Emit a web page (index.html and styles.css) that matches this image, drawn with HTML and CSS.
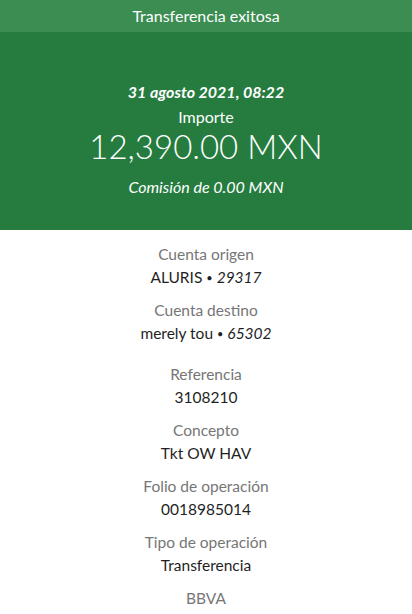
FILE: index.html
```html
<!DOCTYPE html>
<html lang="es">
<head>
    <meta charset="UTF-8">
    <meta name="viewport" content="width=device-width, initial-scale=1.0">
    <title>Transferencia exitosa</title>
    <link rel="stylesheet" href="styles.css">
</head>
<body>

    <div class="topbar">Transferencia exitosa</div>

    <div class="summary">
        <div class="date">31 agosto 2021, 08:22</div>
        <div class="amount-label">Importe</div>
        <div class="amount">12,390.00 MXN</div>
        <div class="fee">Comisión de 0.00 MXN</div>
    </div>

    <div class="details">
        <div class="item">
            <div class="label">Cuenta origen</div>
            <div class="value">ALURIS <span class="dot">•</span> <i>29317</i></div>
        </div>
        <div class="item">
            <div class="label">Cuenta destino</div>
            <div class="value">merely tou <span class="dot">•</span> <i>65302</i></div>
        </div>
        <div class="item item-first">
            <div class="label">Referencia</div>
            <div class="value">3108210</div>
        </div>
        <div class="item">
            <div class="label">Concepto</div>
            <div class="value">Tkt OW HAV</div>
        </div>
        <div class="item">
            <div class="label">Folio de operación</div>
            <div class="value">0018985014</div>
        </div>
        <div class="item">
            <div class="label">Tipo de operación</div>
            <div class="value">Transferencia</div>
        </div>
        <div class="item">
            <div class="label">BBVA</div>
        </div>
    </div>

</body>
</html>
```

FILE: styles.css
```css
body {
    margin: 0;
    font-family: Lato, "Open Sans", sans-serif;
    background: #ffffff;
    text-align: center;
}
.topbar {
    height: 32px;
    line-height: 32px;
    background: #3b8d51;
    color: #ffffff;
    font-size: 16px;
}
.summary {
    background: #267c3f;
    color: #ffffff;
    padding: 50px 0 33px;
}
.date {
    font-size: 16px;
    line-height: 20px;
    font-weight: bold;
    font-style: italic;
}
.amount-label {
    margin-top: 5px;
    font-size: 16px;
    line-height: 20px;
}
.amount {
    font-size: 33px;
    line-height: 38px;
    font-weight: 300;
}
.fee {
    margin-top: 12px;
    font-size: 16px;
    line-height: 20px;
    font-style: italic;
}
.details {
    padding-top: 13px;
}
.item {
    margin-bottom: 10px;
}
.item-first {
    margin-top: 18px;
}
.label {
    color: #767676;
    font-size: 15.5px;
    line-height: 23px;
}
.value {
    color: #1f1f1f;
    font-size: 15.5px;
    line-height: 23px;
}
.dot {
    font-size: 11px;
    vertical-align: 1px;
}
```
